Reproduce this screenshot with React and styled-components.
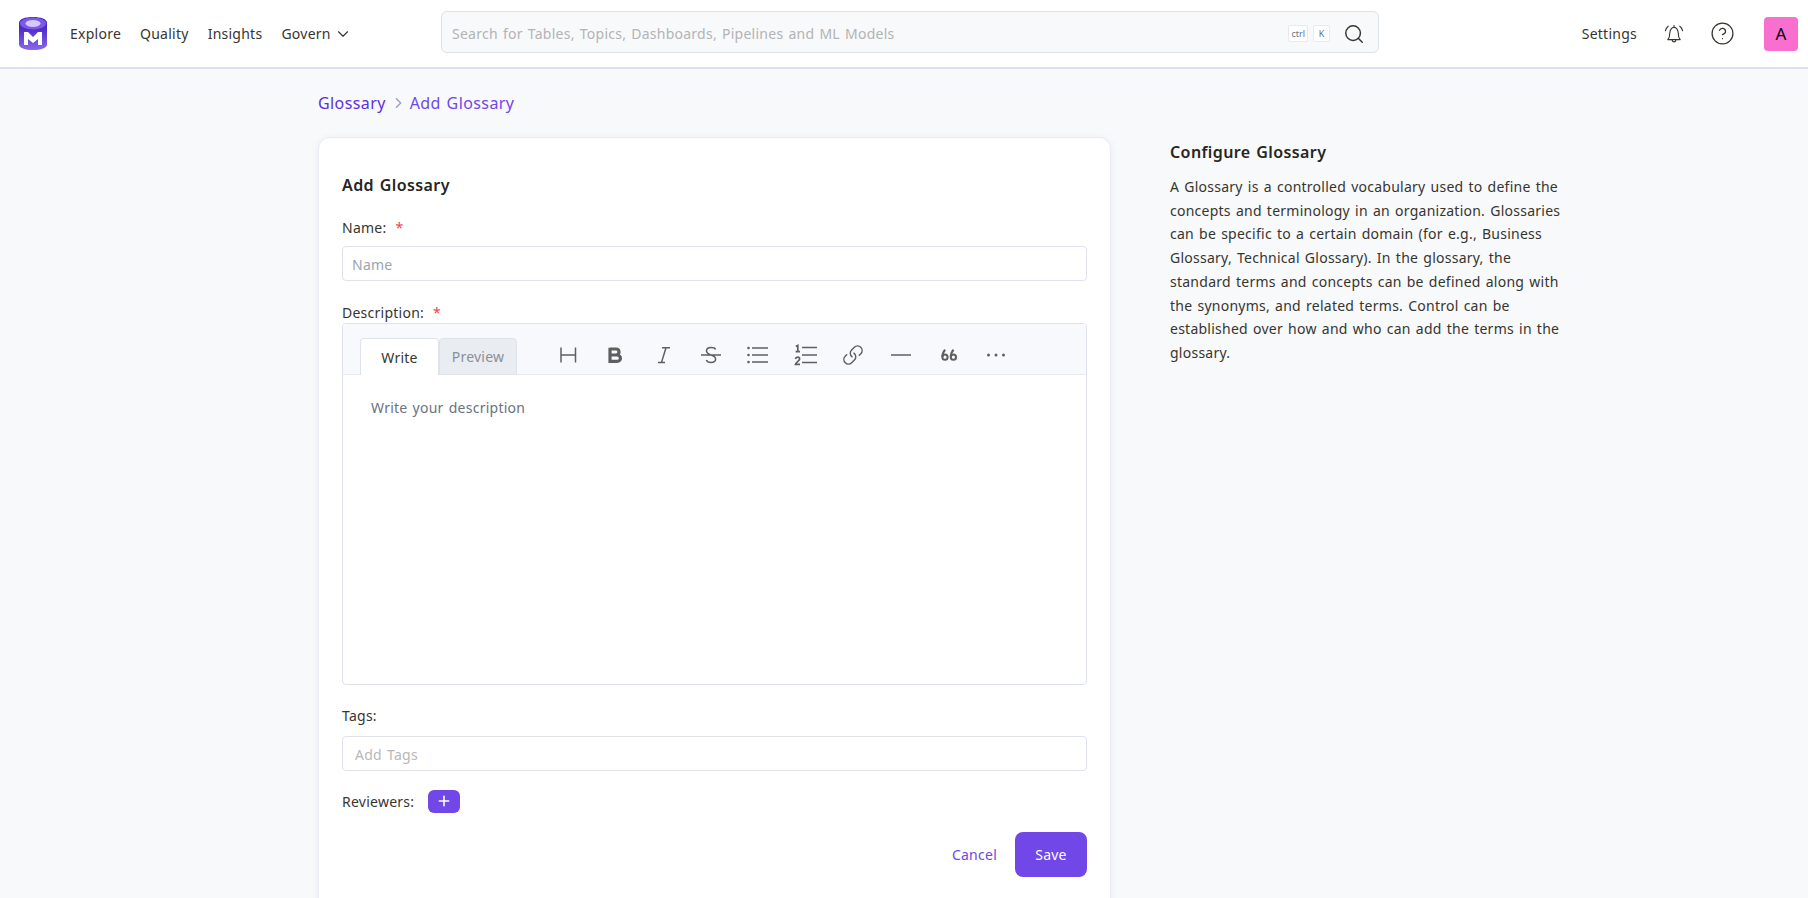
import React from "react";
import styled, { createGlobalStyle } from "styled-components";
import { ChevronDown, Search, Plus, Link, CircleHelp } from "lucide-react";

const GlobalStyle = createGlobalStyle`
  html, body {
    margin: 0;
    height: 100%;
    overflow: hidden;
    background: #f8f9fb;
    font-family: "Noto Sans", "Open Sans", sans-serif;
    font-size: 14px;
    letter-spacing: 0.25px;
    word-spacing: 1.2px;
    color: #37352f;
  }
  * { box-sizing: border-box; }
`;

const Header = styled.header`
  height: 69px;
  background: #fff;
  border-bottom: 2px solid #dde3ee;
  display: flex;
  align-items: center;
  padding: 0 10px 0 19px;
`;
const Logo = styled.svg`
  width: 28px;
  height: 33px;
  flex: none;
  margin-right: 23px;
`;
const Nav = styled.nav`
  display: flex;
  align-items: center;
  gap: 19px;
  width: 371px;
  flex: none;
`;
const NavItem = styled.a`
  display: flex;
  align-items: center;
  gap: 3px;
  color: #37352f;
`;
const SearchBox = styled.div`
  width: 938px;
  height: 42px;
  flex: none;
  margin-bottom: 3px;
  background: #f8f9fb;
  border: 1px solid #dde1e8;
  border-radius: 6px;
  display: flex;
  align-items: center;
  padding: 3px 13px 0 10px;
`;
const SearchHint = styled.span`
  flex: 1;
  color: #b3b3b3;
`;
const Key = styled.kbd`
  height: 17px;
  min-width: 17px;
  padding: 0 2px;
  margin-right: 5px;
  background: #fff;
  border: 1px solid #e6e9f0;
  border-radius: 2px;
  font-family: "Noto Sans", sans-serif;
  font-size: 9px;
  line-height: 15px;
  letter-spacing: 0;
  text-align: center;
  color: #6b7280;
`;
const SearchIcon = styled(Search)`
  margin-left: 8px;
  color: #37352f;
`;
const RightMenu = styled.div`
  margin-left: auto;
  display: flex;
  align-items: center;
`;
const SettingsLink = styled.a`
  color: #37352f;
  margin-right: 27px;
`;
const IconSlot = styled.span`
  display: flex;
  margin-right: ${(p) => p.$gap}px;
  color: #37352f;
`;
const Avatar = styled.div`
  width: 34px;
  height: 34px;
  border-radius: 4px;
  background: #f96fd0;
  color: #000;
  display: flex;
  align-items: center;
  justify-content: center;
  font-size: 17px;
`;

const Page = styled.main`
  padding: 0 0 0 318px;
`;
const Crumbs = styled.div`
  height: 68px;
  display: flex;
  align-items: center;
  gap: 4px;
  font-size: 16px;
  letter-spacing: 0.4px;
  color: #5c2fe0;
`;
const CrumbLast = styled.span`
  color: #7147e8;
`;
const CrumbSep = styled.svg`
  width: 16px;
  height: 16px;
  color: #9ca3af;
`;
const Columns = styled.div`
  display: flex;
  align-items: flex-start;
`;
const Card = styled.section`
  width: 793px;
  height: 800px;
  flex: none;
  background: #fff;
  border: 1px solid #e8ebf3;
  border-radius: 12px;
  box-shadow: 0 1px 8px rgba(30, 40, 80, 0.06);
  padding: 36px 23px 0;
`;
const CardTitle = styled.h2`
  margin: 0 0 22px;
  font-size: 16px;
  line-height: 22px;
  font-weight: 600;
  letter-spacing: 0.4px;
  color: #26251f;
`;
const Label = styled.label`
  display: block;
  line-height: 20px;
  color: #37352f;
  margin-bottom: ${(p) => p.$gap}px;
`;
const Required = styled.span`
  color: #ef4444;
  margin-left: 9px;
`;
const Input = styled.input`
  display: block;
  width: 100%;
  height: 35px;
  border: 1px solid #dfe2ec;
  border-radius: 4px;
  background: #fff;
  padding: 2px ${(p) => p.$inset}px 0;
  font: inherit;
  letter-spacing: inherit;
  word-spacing: inherit;
  margin-bottom: ${(p) => p.$gap}px;
  &::placeholder {
    color: ${(p) => p.$hint};
    opacity: 1;
  }
`;
const Editor = styled.div`
  height: 362px;
  border: 1px solid #dfe2ec;
  border-radius: 4px;
  margin-bottom: 21px;
  overflow: hidden;
`;
const EditorBar = styled.div`
  height: 51px;
  background: #f7f9fc;
  border-bottom: 1px solid #e5e9f2;
  display: flex;
  padding: 14px 0 0 17px;
`;
const EditorTab = styled.div`
  width: ${(p) => p.$w}px;
  height: 37px;
  border: 1px solid #dfe2ec;
  border-bottom: ${(p) => (p.$active ? "none" : "1px solid #dfe2ec")};
  border-radius: 4px 4px 0 0;
  background: ${(p) => (p.$active ? "#fff" : "#e9ecf1")};
  color: ${(p) => (p.$active ? "#37352f" : "#8a8f98")};
  display: flex;
  align-items: center;
  justify-content: center;
`;
const ToolRow = styled.div`
  display: flex;
  align-items: center;
  height: 24px;
  margin: 5px 0 0 27px;
  color: #5f5f5f;
`;
const ToolSlot = styled.span`
  width: 47.6px;
  height: 24px;
  display: flex;
  align-items: center;
  justify-content: center;
`;
const ToolSvg = styled.svg`
  width: 24px;
  height: 24px;
  fill: none;
  stroke: currentColor;
  stroke-width: 1.5;
`;
const EditorBody = styled.div`
  padding: 23px 28px;
  color: #6b7280;
`;
const ReviewerRow = styled.div`
  display: flex;
  align-items: center;
  gap: 14px;
  height: 24px;
  margin-bottom: 19px;
`;
const ReviewerLabel = styled.span`
  color: #37352f;
`;
const AddButton = styled.button`
  width: 32px;
  height: 23px;
  border: none;
  border-radius: 6px;
  background: #7147e8;
  color: #fff;
  display: flex;
  align-items: center;
  justify-content: center;
  padding: 0;
`;
const Actions = styled.div`
  display: flex;
  justify-content: flex-end;
  align-items: center;
  gap: 18px;
`;
const CancelButton = styled.a`
  color: #7147e8;
`;
const SaveButton = styled.button`
  width: 72px;
  height: 45px;
  border: none;
  border-radius: 8px;
  background: #7147e8;
  color: #fff;
  font: inherit;
  letter-spacing: inherit;
`;
const Side = styled.aside`
  width: 400px;
  margin-left: 59px;
  padding-top: 4px;
`;
const SideTitle = styled.h3`
  margin: 0 0 12px;
  font-size: 16px;
  line-height: 22px;
  font-weight: 600;
  letter-spacing: 0.4px;
  color: #26251f;
`;
const SideText = styled.p`
  margin: 0;
  line-height: 23.7px;
  color: #37352f;
`;

const LogoMark = () => (
  <Logo viewBox="0 0 28 33">
    <defs>
      <linearGradient id="logoBody" x1="0" y1="0" x2="0" y2="1">
        <stop offset="0.3" stopColor="#4a27c4" />
        <stop offset="1" stopColor="#8a66ee" />
      </linearGradient>
    </defs>
    <path d="M0 6 C0 2 6 0 14 0 C22 0 28 2 28 6 V27 C28 31 22 33 14 33 C6 33 0 31 0 27 Z" fill="url(#logoBody)" />
    <ellipse cx="14" cy="6.5" rx="13" ry="6" fill="#7d58ea" />
    <ellipse cx="14" cy="6.5" rx="7.5" ry="3.4" fill="#d4c9fa" />
    <path d="M5 28 V15 H9 L14 20 L19 15 H23 V28 H19 V22 L14 26 L9 22 V28 Z" fill="#fff" />
  </Logo>
);

const BellIcon = () => (
  <svg width="20" height="20" viewBox="0 0 20 20" fill="none" stroke="#37352f" strokeWidth="1.1" strokeLinecap="round" strokeLinejoin="round">
    <path d="M10 1.6 V3.2 M5.8 9 C5.8 6 7.6 3.4 10 3.4 C12.4 3.4 14.2 6 14.2 9 C14.2 12 14.8 14 16.2 15.6 H3.8 C5.2 14 5.8 12 5.8 9 Z" />
    <path d="M8.2 15.8 C8.2 18.6 11.8 18.6 11.8 15.8" />
    <path d="M1.4 6.8 C1.9 4.8 2.8 3.2 4.2 2.2 M18.6 6.8 C18.1 4.8 17.2 3.2 15.8 2.2" />
  </svg>
);

const HeadingIcon = () => (
  <ToolSvg viewBox="0 0 24 24">
    <path d="M5 4.5 V19.5 M19.5 4.5 V19.5 M5 12 H19.5" />
  </ToolSvg>
);
const BoldIcon = () => (
  <ToolSvg viewBox="0 0 24 24" style={{ strokeWidth: 3.2 }}>
    <path d="M7 6 H13 C17 6 17 12 13 12 H7 M7 12 H14 C18.6 12 18.6 18.4 14 18.4 H7 Z M7 4.8 V18.6" />
  </ToolSvg>
);
const ItalicIcon = () => (
  <ToolSvg viewBox="0 0 24 24">
    <path d="M11 4.7 H19 M7 19.4 H14 M15 4.7 L10.5 19.4" />
  </ToolSvg>
);
const StrikeIcon = () => (
  <ToolSvg viewBox="0 0 24 24">
    <path d="M2 12 H22 M16.5 6.5 C16 5 14.4 4.6 12 4.6 C9 4.6 7.5 6 7.5 8 C7.5 10 9.5 11 12 12 C15 13 16.6 14 16.6 16 C16.6 18.2 14.8 19.4 12 19.4 C9.6 19.4 8 18.8 7.3 17" />
  </ToolSvg>
);
const BulletIcon = () => (
  <ToolSvg viewBox="0 0 24 24">
    <path d="M6 5 H22 M6 12 H22 M6 19 H22" />
    <circle cx="2.5" cy="5" r="1.3" fill="currentColor" stroke="none" />
    <circle cx="2.5" cy="12" r="1.3" fill="currentColor" stroke="none" />
    <circle cx="2.5" cy="19" r="1.3" fill="currentColor" stroke="none" />
  </ToolSvg>
);
const NumberedIcon = () => (
  <ToolSvg viewBox="0 0 24 24">
    <path d="M8 4.5 H23 M8 12 H23 M8 19.5 H23" />
    <path d="M1.8 3.4 L3.8 2.4 V8.6 M1.6 8.6 H6 M1.4 16 C1.8 13.6 5.6 13.6 5.6 16 C5.6 18 2 19 1.4 21.4 H6" strokeWidth="1.7" />
  </ToolSvg>
);
const RuleIcon = () => (
  <ToolSvg viewBox="0 0 24 24">
    <path d="M2 12 H22" />
  </ToolSvg>
);
const QuoteIcon = () => (
  <ToolSvg viewBox="0 0 24 24">
    <circle cx="8" cy="14.2" r="2.6" strokeWidth="2" />
    <circle cx="16.4" cy="14.2" r="2.6" strokeWidth="2" />
    <path d="M5.4 14 C5.4 10.5 6.5 8.4 8.2 6.8 M13.8 14 C13.8 10.5 14.9 8.4 16.6 6.8" strokeWidth="2" />
  </ToolSvg>
);
const DotsIcon = () => (
  <ToolSvg viewBox="0 0 24 24">
    <circle cx="4.5" cy="12" r="1.5" fill="currentColor" stroke="none" />
    <circle cx="12" cy="12" r="1.5" fill="currentColor" stroke="none" />
    <circle cx="19.5" cy="12" r="1.5" fill="currentColor" stroke="none" />
  </ToolSvg>
);

const toolIcons = [
  HeadingIcon,
  BoldIcon,
  ItalicIcon,
  StrikeIcon,
  BulletIcon,
  NumberedIcon,
  () => <Link size={22} strokeWidth={1.6} style={{ transform: "scaleX(-1) rotate(90deg)" }} />,
  RuleIcon,
  QuoteIcon,
  DotsIcon,
];

export default function App() {
  return (
    <>
      <GlobalStyle />
      <Header>
        <LogoMark />
        <Nav>
          <NavItem>Explore</NavItem>
          <NavItem>Quality</NavItem>
          <NavItem>Insights</NavItem>
          <NavItem>
            Govern <ChevronDown size={18} strokeWidth={1.5} />
          </NavItem>
        </Nav>
        <SearchBox>
          <SearchHint>Search for Tables, Topics, Dashboards, Pipelines and ML Models</SearchHint>
          <Key>ctrl</Key>
          <Key>K</Key>
          <SearchIcon size={22} strokeWidth={1.6} />
        </SearchBox>
        <RightMenu>
          <SettingsLink>Settings</SettingsLink>
          <IconSlot $gap={26}><BellIcon /></IconSlot>
          <IconSlot $gap={29}><CircleHelp size={25} strokeWidth={1.2} /></IconSlot>
          <Avatar>A</Avatar>
        </RightMenu>
      </Header>
      <Page>
        <Crumbs>
          <span>Glossary</span>
          <CrumbSep viewBox="0 0 24 24" fill="none" stroke="currentColor" strokeWidth="2">
            <path d="M9 5 L16 12 L9 19" />
          </CrumbSep>
          <CrumbLast>Add Glossary</CrumbLast>
        </Crumbs>
        <Columns>
          <Card>
            <CardTitle>Add Glossary</CardTitle>
            <Label $gap={8}>Name:<Required>*</Required></Label>
            <Input $gap={22} $inset={9} $hint="#9ca3af" placeholder="Name" />
            <Label $gap={0}>Description:<Required>*</Required></Label>
            <Editor>
              <EditorBar>
                <EditorTab $active $w={79}>Write</EditorTab>
                <EditorTab $w={78}>Preview</EditorTab>
                <ToolRow>
                  {toolIcons.map((Icon, i) => (
                    <ToolSlot key={i}><Icon /></ToolSlot>
                  ))}
                </ToolRow>
              </EditorBar>
              <EditorBody>Write your description</EditorBody>
            </Editor>
            <Label $gap={10}>Tags:</Label>
            <Input $gap={18} $inset={12} $hint="#b8b8b8" placeholder="Add Tags" />
            <ReviewerRow>
              <ReviewerLabel>Reviewers:</ReviewerLabel>
              <AddButton><Plus size={16} strokeWidth={2.4} /></AddButton>
            </ReviewerRow>
            <Actions>
              <CancelButton>Cancel</CancelButton>
              <SaveButton>Save</SaveButton>
            </Actions>
          </Card>
          <Side>
            <SideTitle>Configure Glossary</SideTitle>
            <SideText>
              A Glossary is a controlled vocabulary used to define the concepts and terminology in an organization. Glossaries can be specific to a certain domain (for e.g., Business Glossary, Technical Glossary). In the glossary, the standard terms and concepts can be defined along with the synonyms, and related terms. Control can be established over how and who can add the terms in the glossary.
            </SideText>
          </Side>
        </Columns>
      </Page>
    </>
  );
}
